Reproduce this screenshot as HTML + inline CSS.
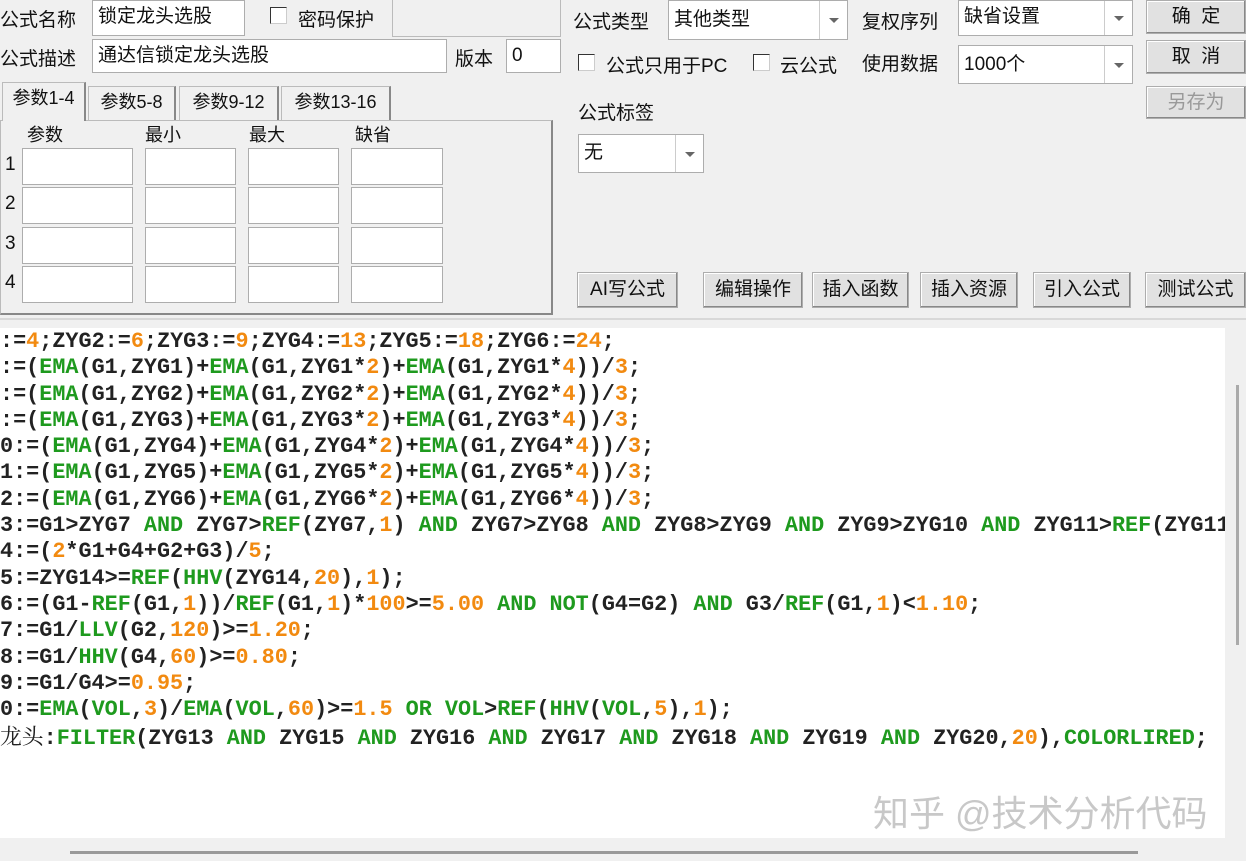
<!DOCTYPE html>
<html><head><meta charset="utf-8"><style>
*{box-sizing:border-box;margin:0;padding:0}
body{width:1246px;height:861px;overflow:hidden;background:#f0f0f0;position:relative;font-family:"Liberation Sans","Noto Sans CJK SC",sans-serif;font-size:19px;color:#111}
.a{position:absolute;white-space:nowrap}
.in{position:absolute;background:#fff;border:1px solid #adadad;padding:4px 5px;font-size:19px;line-height:24px}
.cb{position:absolute;width:17px;height:17px;background:#fff;border:1px solid #333;border-right-color:#ccc;border-bottom-color:#ccc}
.dd{position:absolute;top:0;right:0;bottom:0;width:28px;border-left:1px solid #ccc}
.dd:after{content:"";position:absolute;left:9px;top:50%;margin-top:-2px;border-left:5px solid transparent;border-right:5px solid transparent;border-top:5px solid #666}
.btn{position:absolute;background:#e1e1e1;border:1px solid #adadad;box-shadow:inset -1px -1px 0 #888,inset 1px 1px 0 #fff;text-align:center;font-size:19px}
.tab{position:absolute;border:1px solid #bbb;border-bottom:none;background:#f0f0f0;text-align:center;font-size:18px;line-height:30px}
.box{position:absolute;background:#fff;border:1px solid #adadad;width:111px;height:37px}
#code{position:absolute;left:0;top:328px;width:1225px;height:510px;background:#fff;overflow:hidden}
#code pre{font-family:"Liberation Mono",monospace;font-weight:bold;font-size:21.8px;line-height:26.3px;color:#222;position:absolute;left:0;top:1px;white-space:pre}
.g{color:#1e9a1e}.o{color:#f28a10}
.cj{font-family:"Noto Serif CJK SC",serif;font-weight:normal}
</style></head><body>
<div class="a" style="left:0;top:5px">公式名称</div>
<div class="in" style="left:92px;top:0;width:153px;height:36px">锁定龙头选股</div>
<div class="cb" style="left:270px;top:7px"></div>
<div class="a" style="left:298px;top:5px">密码保护</div>
<div class="a" style="left:392px;top:0;width:169px;height:37px;border:1px solid #bbb;border-top:none"></div>
<div class="a" style="left:0;top:44px">公式描述</div>
<div class="in" style="left:92px;top:39px;width:355px;height:34px">通达信锁定龙头选股</div>
<div class="a" style="left:455px;top:44px">版本</div>
<div class="in" style="left:506px;top:39px;width:55px;height:34px">0</div>

<div class="a" style="left:0;top:120px;width:553px;height:195px;border:1px solid #bbb;border-right:2px solid #888;border-bottom:2px solid #888"></div>
<div class="tab" style="left:2px;top:82px;width:84px;height:39px;border-right:2px solid #888">参数1-4</div>
<div class="tab" style="left:88px;top:86px;width:88px;height:34px;border-right:2px solid #888">参数5-8</div>
<div class="tab" style="left:179px;top:86px;width:100px;height:34px;border-right:2px solid #888">参数9-12</div>
<div class="tab" style="left:281px;top:86px;width:110px;height:34px;border-right:2px solid #888">参数13-16</div>
<div class="a" style="left:27px;top:121px;font-size:18px">参数</div>
<div class="a" style="left:145px;top:121px;font-size:18px">最小</div>
<div class="a" style="left:249px;top:121px;font-size:18px">最大</div>
<div class="a" style="left:355px;top:121px;font-size:18px">缺省</div>
<div class="a" style="left:5px;top:154px">1</div><div class="a" style="left:5px;top:193px">2</div><div class="a" style="left:5px;top:233px">3</div><div class="a" style="left:5px;top:272px">4</div>
<div class="box" style="left:22px;top:148px"></div><div class="box" style="left:145px;top:148px;width:91px"></div><div class="box" style="left:248px;top:148px;width:91px"></div><div class="box" style="left:351px;top:148px;width:92px"></div>
<div class="box" style="left:22px;top:187px"></div><div class="box" style="left:145px;top:187px;width:91px"></div><div class="box" style="left:248px;top:187px;width:91px"></div><div class="box" style="left:351px;top:187px;width:92px"></div>
<div class="box" style="left:22px;top:227px"></div><div class="box" style="left:145px;top:227px;width:91px"></div><div class="box" style="left:248px;top:227px;width:91px"></div><div class="box" style="left:351px;top:227px;width:92px"></div>
<div class="box" style="left:22px;top:266px"></div><div class="box" style="left:145px;top:266px;width:91px"></div><div class="box" style="left:248px;top:266px;width:91px"></div><div class="box" style="left:351px;top:266px;width:92px"></div>

<div class="a" style="left:573px;top:7px">公式类型</div>
<div class="in" style="left:668px;top:0;width:180px;height:40px;padding-top:7px">其他类型<div class="dd"></div></div>
<div class="a" style="left:862px;top:7px">复权序列</div>
<div class="in" style="left:958px;top:0;width:175px;height:36px">缺省设置<div class="dd"></div></div>
<div class="btn" style="left:1146px;top:0;width:100px;height:34px;line-height:32px">确&nbsp;&nbsp;定</div>
<div class="btn" style="left:1146px;top:40px;width:100px;height:34px;line-height:32px">取&nbsp;&nbsp;消</div>
<div class="btn" style="left:1146px;top:86px;width:100px;height:33px;line-height:31px;color:#999">另存为</div>
<div class="cb" style="left:578px;top:54px"></div>
<div class="a" style="left:606px;top:51px">公式只用于PC</div>
<div class="cb" style="left:753px;top:54px"></div>
<div class="a" style="left:780px;top:51px">云公式</div>
<div class="a" style="left:862px;top:49px">使用数据</div>
<div class="in" style="left:958px;top:45px;width:175px;height:39px;padding-top:7px">1000个<div class="dd"></div></div>
<div class="a" style="left:578px;top:98px">公式标签</div>
<div class="in" style="left:578px;top:134px;width:126px;height:39px;padding-top:6px">无<div class="dd"></div></div>
<div class="btn" style="left:577px;top:272px;width:101px;height:36px;line-height:34px">AI写公式</div>
<div class="btn" style="left:703px;top:272px;width:100px;height:36px;line-height:34px">编辑操作</div>
<div class="btn" style="left:812px;top:272px;width:97px;height:36px;line-height:34px">插入函数</div>
<div class="btn" style="left:920px;top:272px;width:98px;height:36px;line-height:34px">插入资源</div>
<div class="btn" style="left:1033px;top:272px;width:98px;height:36px;line-height:34px">引入公式</div>
<div class="btn" style="left:1145px;top:272px;width:101px;height:36px;line-height:34px">测试公式</div>
<div class="a" style="left:0;top:318px;width:1246px;height:2px;background:#d8d8d8"></div>

<div id="code"><pre>:=<span class="o">4</span>;ZYG2:=<span class="o">6</span>;ZYG3:=<span class="o">9</span>;ZYG4:=<span class="o">13</span>;ZYG5:=<span class="o">18</span>;ZYG6:=<span class="o">24</span>;
:=(<span class="g">EMA</span>(G1,ZYG1)+<span class="g">EMA</span>(G1,ZYG1*<span class="o">2</span>)+<span class="g">EMA</span>(G1,ZYG1*<span class="o">4</span>))/<span class="o">3</span>;
:=(<span class="g">EMA</span>(G1,ZYG2)+<span class="g">EMA</span>(G1,ZYG2*<span class="o">2</span>)+<span class="g">EMA</span>(G1,ZYG2*<span class="o">4</span>))/<span class="o">3</span>;
:=(<span class="g">EMA</span>(G1,ZYG3)+<span class="g">EMA</span>(G1,ZYG3*<span class="o">2</span>)+<span class="g">EMA</span>(G1,ZYG3*<span class="o">4</span>))/<span class="o">3</span>;
0:=(<span class="g">EMA</span>(G1,ZYG4)+<span class="g">EMA</span>(G1,ZYG4*<span class="o">2</span>)+<span class="g">EMA</span>(G1,ZYG4*<span class="o">4</span>))/<span class="o">3</span>;
1:=(<span class="g">EMA</span>(G1,ZYG5)+<span class="g">EMA</span>(G1,ZYG5*<span class="o">2</span>)+<span class="g">EMA</span>(G1,ZYG5*<span class="o">4</span>))/<span class="o">3</span>;
2:=(<span class="g">EMA</span>(G1,ZYG6)+<span class="g">EMA</span>(G1,ZYG6*<span class="o">2</span>)+<span class="g">EMA</span>(G1,ZYG6*<span class="o">4</span>))/<span class="o">3</span>;
3:=G1&gt;ZYG7 <span class="g">AND</span> ZYG7&gt;<span class="g">REF</span>(ZYG7,<span class="o">1</span>) <span class="g">AND</span> ZYG7&gt;ZYG8 <span class="g">AND</span> ZYG8&gt;ZYG9 <span class="g">AND</span> ZYG9&gt;ZYG10 <span class="g">AND</span> ZYG11&gt;<span class="g">REF</span>(ZYG11,1)
4:=(<span class="o">2</span>*G1+G4+G2+G3)/<span class="o">5</span>;
5:=ZYG14&gt;=<span class="g">REF</span>(<span class="g">HHV</span>(ZYG14,<span class="o">20</span>),<span class="o">1</span>);
6:=(G1-<span class="g">REF</span>(G1,<span class="o">1</span>))/<span class="g">REF</span>(G1,<span class="o">1</span>)*<span class="o">100</span>&gt;=<span class="o">5.00</span> <span class="g">AND</span> <span class="g">NOT</span>(G4=G2) <span class="g">AND</span> G3/<span class="g">REF</span>(G1,<span class="o">1</span>)&lt;<span class="o">1.10</span>;
7:=G1/<span class="g">LLV</span>(G2,<span class="o">120</span>)&gt;=<span class="o">1.20</span>;
8:=G1/<span class="g">HHV</span>(G4,<span class="o">60</span>)&gt;=<span class="o">0.80</span>;
9:=G1/G4&gt;=<span class="o">0.95</span>;
0:=<span class="g">EMA</span>(<span class="g">VOL</span>,<span class="o">3</span>)/<span class="g">EMA</span>(<span class="g">VOL</span>,<span class="o">60</span>)&gt;=<span class="o">1.5</span> <span class="g">OR</span> <span class="g">VOL</span>&gt;<span class="g">REF</span>(<span class="g">HHV</span>(<span class="g">VOL</span>,<span class="o">5</span>),<span class="o">1</span>);
<span class="cj">龙头</span>:<span class="g">FILTER</span>(ZYG13 <span class="g">AND</span> ZYG15 <span class="g">AND</span> ZYG16 <span class="g">AND</span> ZYG17 <span class="g">AND</span> ZYG18 <span class="g">AND</span> ZYG19 <span class="g">AND</span> ZYG20,<span class="o">20</span>),<span class="g">COLORLIRED</span>;</pre>
<div class="a" style="left:873px;top:457px;font-size:36px;color:#c8c8c8">知乎 @技术分析代码</div>
</div>
<div class="a" style="left:1236px;top:385px;width:3px;height:260px;background:#aaa"></div>
<div class="a" style="left:70px;top:851px;width:1068px;height:3px;background:#999"></div>
</body></html>
